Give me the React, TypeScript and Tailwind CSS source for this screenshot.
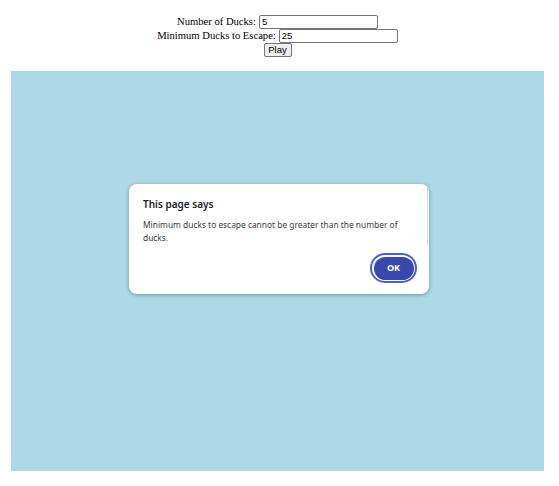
import React from "react";

export default function App() {
  return (
    <div className="w-[559px] h-[486px] bg-white relative overflow-hidden">
      <div className="pt-[15px] pr-[4px] flex flex-col items-center font-['Liberation_Serif',serif] text-[10.6px] text-black leading-[14px]">
        <div className="flex items-center h-[14px]">
          <span className="mr-[3px]">Number of Ducks:</span>
          <div className="w-[119px] h-[14px] border border-[#767676] rounded-[2px] bg-white flex items-center pl-[2px] font-['Liberation_Sans',sans-serif] text-[9.5px]">5</div>
        </div>
        <div className="flex items-center h-[14px]">
          <span className="mr-[3px]">Minimum Ducks to Escape:</span>
          <div className="w-[119px] h-[14px] border border-[#767676] rounded-[2px] bg-white flex items-center pl-[2px] font-['Liberation_Sans',sans-serif] text-[9.5px]">25</div>
        </div>
        <div className="h-[14px] flex items-center">
          <div className="w-[28px] h-[14px] border border-[#767676] rounded-[2px] bg-[#efefef] flex items-center justify-center font-['Liberation_Sans',sans-serif] text-[9.5px]">Play</div>
        </div>
      </div>
      <div className="ml-[11px] mt-[14px] w-[533px] h-[400px] bg-[#add8e6] relative">
        <div className="absolute left-[118px] top-[113px] w-[300px] h-[110px] bg-white rounded-[8px] shadow-[0_1px_4px_rgba(0,0,0,0.3)] font-['Noto_Sans',sans-serif] px-[14px] pt-[12px]">
          <div className="absolute right-[1px] top-[2px] w-[1px] h-[58px] bg-[#d8d8d8]" />
          <div className="text-[10px] font-semibold text-[#202124] leading-[16px]">This page says</div>
          <div className="mt-[6px] text-[8.4px] text-[#3c4043] leading-[13px]">
            Minimum ducks to escape cannot be greater than the number of ducks.
          </div>
          <div className="absolute right-[12px] bottom-[11px] w-[47px] h-[30px] rounded-full border-[2px] border-[#4a5bd3] p-[1.5px] bg-white">
            <div className="w-full h-full rounded-full bg-[#3949ab] flex items-center justify-center text-white text-[9px] font-bold">OK</div>
          </div>
        </div>
      </div>
    </div>
  );
}
